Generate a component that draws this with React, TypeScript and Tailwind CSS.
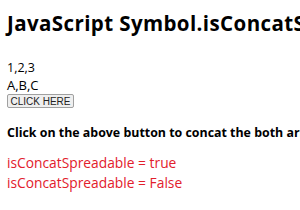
import React from 'react';

const App: React.FC = () => {
  return (
    <div className="w-[300px] h-[210px] overflow-hidden bg-white text-black whitespace-nowrap" style={{ fontFamily: '"Open Sans", "Noto Sans", sans-serif' }}>
      <div className="pl-[7px] pt-[9px]">
        <h1 className="text-[20.5px] font-bold leading-[28px] tracking-[0.4px]">JavaScript Symbol.isConcatSpreadable</h1>
        <div className="mt-[22px] text-[12.5px] leading-[17px]">1,2,3</div>
        <div className="text-[13px] leading-[18px]">A,B,C</div>
        <div className="flex leading-none">
          <button className="h-[14px] w-[67px] border border-[#a0a0a0] rounded-[2px] bg-[#efefef] text-[10px] leading-[11px] text-[#222]" style={{ fontFamily: '"Liberation Sans", Arial, sans-serif' }}>
            CLICK HERE
          </button>
        </div>
        <h4 className="mt-[16px] text-[12.4px] font-bold leading-[18px]">Click on the above button to concat the both arrays</h4>
        <div className="mt-[11px] text-[#e2202c] text-[13.8px] leading-[20px]">
          <div>isConcatSpreadable = true</div>
          <div>isConcatSpreadable = False</div>
        </div>
      </div>
    </div>
  );
};

export default App;
